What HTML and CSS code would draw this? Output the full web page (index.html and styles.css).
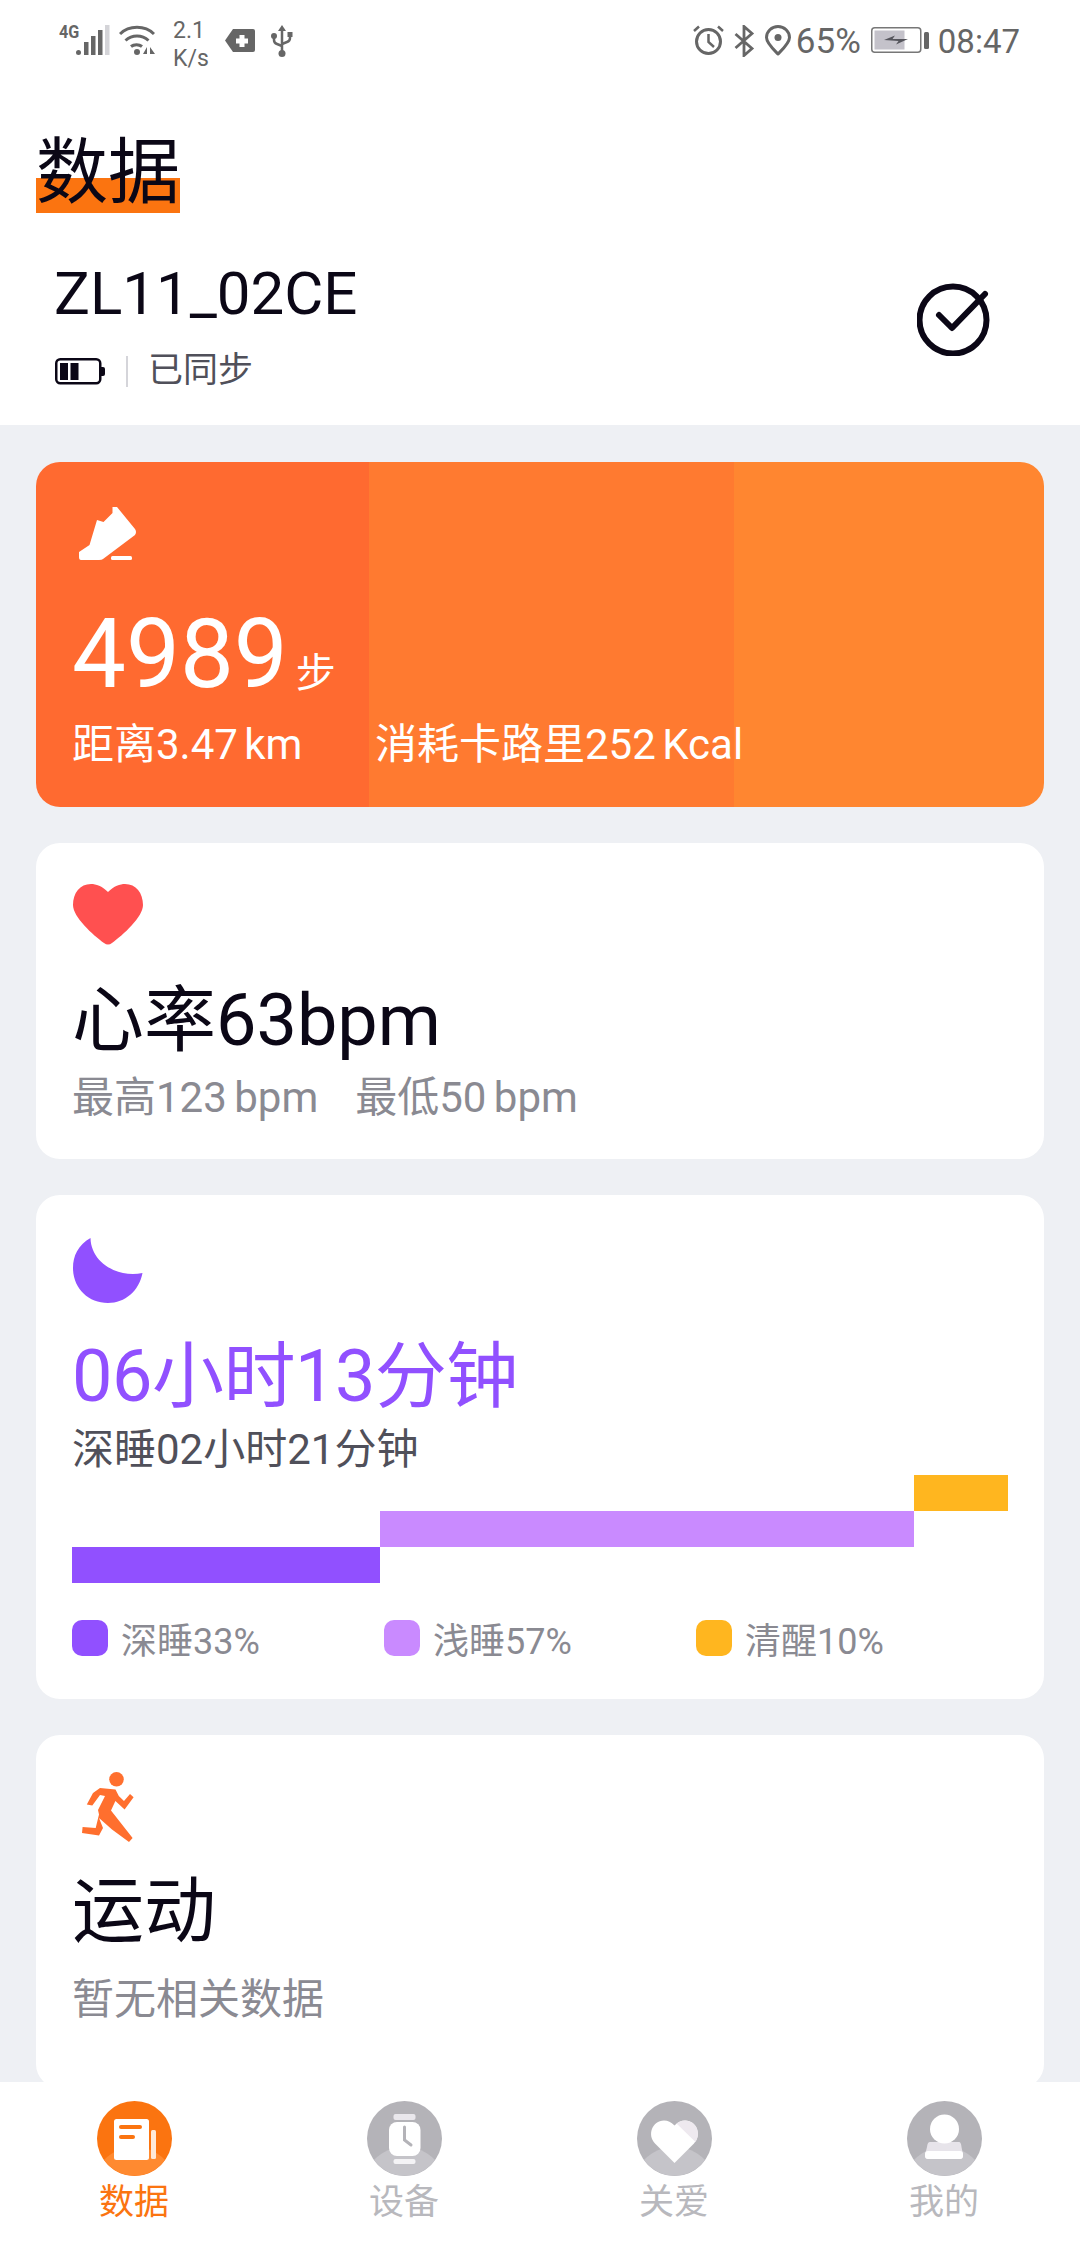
FILE: index.html
```html
<!DOCTYPE html>
<html lang="zh-CN">
<head>
    <meta charset="UTF-8">
    <meta name="viewport" content="width=device-width, initial-scale=1.0">
    <title>数据</title>
    <link rel="stylesheet" href="styles.css">
</head>
<body>
    <div class="app">
        <!-- status bar -->
        <div class="status-bar">
            <div class="status-left">
                <span class="net-type">4G</span>
                <svg class="ic-signal" width="34" height="30" viewBox="0 0 34 30">
                    <circle cx="2.500" cy="27.500" r="2.500" fill="#666"/>
                    <rect x="8" y="17" width="4.500" height="13" fill="#666"/>
                    <rect x="15" y="11" width="4.500" height="19" fill="#666"/>
                    <rect x="22" y="5" width="4.500" height="25" fill="#666"/>
                    <rect x="29" y="0" width="4.500" height="30" fill="#d4d4d8"/>
                </svg>
                <svg class="ic-wifi" width="36" height="30" viewBox="0 0 36 30" fill="none" stroke="#666" stroke-width="3">
                    <path d="M1 9C10 0 26 0 35 9"/>
                    <path d="M6.500 15.500C13 9.500 23 9.500 29.500 15.500"/>
                    <path d="M12 21.500C15 19 20 19 23 21.500"/>
                    <circle cx="18" cy="27" r="3" fill="#666" stroke="none"/>
                    <path d="M24 29L28 22V29ZM31 22V29L36 29Z" fill="#666" stroke="none"/>
                </svg>
                <div class="net-speed">2.1<br>K/s</div>
                <svg class="ic-tag" width="30" height="23" viewBox="0 0 30 23">
                    <path d="M8 0H28a2 2 0 0 1 2 2V21a2 2 0 0 1-2 2H8L0 11.500Z" fill="#666"/>
                    <path d="M14.500 6H19.500V9.500H23V14.500H19.500V18H14.500V14.500H11V9.500H14.500Z" fill="#fff"/>
                </svg>
                <svg class="ic-usb" width="22" height="32" viewBox="0 0 22 32" fill="none" stroke="#666" stroke-width="2.500">
                    <path d="M11 3V28"/>
                    <path d="M11 0L15 6H7Z" fill="#666" stroke="none"/>
                    <circle cx="11" cy="28.500" r="3.500" fill="#666" stroke="none"/>
                    <path d="M3 12V15Q3 18 6 19L11 21"/>
                    <path d="M19 10V13Q19 16 16 17L11 19"/>
                    <circle cx="3" cy="11" r="3" fill="#666" stroke="none"/>
                    <rect x="16.500" y="7" width="5" height="5" fill="#666" stroke="none"/>
                </svg>
            </div>
            <div class="status-right">
                <svg class="ic-alarm" width="31" height="30" viewBox="0 0 31 30" fill="none" stroke="#666" stroke-width="3">
                    <circle cx="15.500" cy="16.500" r="12"/>
                    <path d="M15.500 9V17L21 22" stroke-width="2.500"/>
                    <path d="M1 6L6 1.500M30 6L25 1.500" stroke-width="2.500"/>
                </svg>
                <svg class="ic-bt" width="21" height="32" viewBox="0 0 21 32" fill="none" stroke="#666" stroke-width="2.800">
                    <path d="M1.500 9L18 23.500L10 30.500V1.500L18 8.500L1.500 23"/>
                </svg>
                <svg class="ic-pin" width="26" height="31" viewBox="0 0 26 31" fill="none" stroke="#666" stroke-width="3">
                    <path d="M13 29C8 24 1.500 18 1.500 12.500A11.500 11 0 0 1 24.500 12.500C24.500 18 18 24 13 29Z" stroke-linejoin="round"/>
                    <circle cx="13" cy="12.500" r="3.500" fill="#666" stroke="none"/>
                </svg>
                <span class="status-text batt-pct">65%</span>
                <svg class="ic-batt" width="58" height="26" viewBox="0 0 58 26">
                    <rect x="0.750" y="0.750" width="49" height="24.500" rx="3" fill="#fff" stroke="#777" stroke-width="1.500"/>
                    <rect x="3.500" y="3.500" width="30" height="19" fill="#c4c2ca"/>
                    <path d="M13 13L24 8.500L21.500 12H37L25 17.500L27.500 14Z" fill="#55555c"/>
                    <rect x="53" y="5" width="5" height="17" rx="1.500" fill="#666"/>
                </svg>
                <span class="status-text clock">08:47</span>
            </div>
        </div>

        <!-- page header with the band device -->
        <header class="page-head">
            <h1 class="page-title">数据</h1>
            <div class="device">
                <div class="device-info">
                    <div class="device-name">ZL11_02CE</div>
                    <div class="device-state">
                        <svg class="ic-band-batt" width="50" height="27" viewBox="0 0 50 27">
                            <rect x="1.250" y="1.250" width="44" height="24" rx="4" fill="none" stroke="#0b0716" stroke-width="2.500"/>
                            <rect x="5" y="5" width="8" height="17" fill="#0b0716"/>
                            <rect x="15.500" y="5" width="8" height="17" fill="#0b0716"/>
                            <path d="M46 9H48a2 2 0 0 1 2 2V16a2 2 0 0 1-2 2H46Z" fill="#0b0716"/>
                        </svg>
                        <span class="state-line"></span>
                        <span class="state-text">已同步</span>
                    </div>
                </div>
                <svg class="ic-synced" width="74" height="74" viewBox="0 0 74 74" fill="none" stroke="#0b0716" stroke-width="6">
                    <circle cx="36" cy="38" r="33.500"/>
                    <path d="M22 33L35 46L68 12" stroke-linecap="round" stroke-linejoin="round" stroke-width="6"/>
                </svg>
            </div>
        </header>

        <main class="content">
            <!-- steps -->
            <section class="card card-steps">
                <svg class="ic-shoe" width="59" height="54" viewBox="0 0 59 54" fill="#fff">
                    <path d="M34.500 0H39L57 22Q59 25 57 28L25 52Q24 53 21 53H3Q1 53 1 50V45L11.500 38L19 13L25.500 15L34.500 6Z"/>
                    <rect x="33" y="49" width="21" height="4" rx="1.500"/>
                </svg>
                <div class="steps-total"><span class="steps-num">4989</span><span class="steps-unit">步</span></div>
                <div class="steps-stats">
                    <div class="stat-dist">距离3.47 km</div>
                    <div class="stat-kcal">消耗卡路里252 Kcal</div>
                </div>
            </section>

            <!-- heart rate -->
            <section class="card card-heart">
                <svg class="ic-heart" width="70" height="61" viewBox="0 0 70 61">
                    <path d="M35 8C29 2 23 0 18 0C7 0 0 9 0 21C0 33 20 51 31 59Q35 62 39 59C50 51 70 33 70 21C70 9 63 0 52 0C47 0 41 2 35 8Z" fill="#ff5050"/>
                </svg>
                <div class="card-title">心率63bpm</div>
                <div class="card-sub gray">
                    <span>最高123 bpm</span>
                    <span>最低50 bpm</span>
                </div>
            </section>

            <!-- sleep -->
            <section class="card card-sleep">
                <svg class="ic-moon" width="70" height="65" viewBox="0 0 70 65">
                    <path d="M17.500 0C5 7 0 18 0 30C0 50 15 65 35 65C52 65 66 53 69.500 35C45 40 18 25 17.500 0Z" fill="#9150ff"/>
                </svg>
                <div class="card-title sleep-total">06小时13分钟</div>
                <div class="card-sub dark">深睡02小时21分钟</div>
                <div class="sleep-bars">
                    <div class="bar bar-deep"></div>
                    <div class="bar bar-light"></div>
                    <div class="bar bar-awake"></div>
                </div>
                <div class="sleep-legend">
                    <div class="legend-item"><i class="dot bar-deep"></i>深睡33%</div>
                    <div class="legend-item"><i class="dot bar-light"></i>浅睡57%</div>
                    <div class="legend-item"><i class="dot bar-awake"></i>清醒10%</div>
                </div>
            </section>

            <!-- sport -->
            <section class="card card-sport">
                <svg class="ic-run" width="52" height="70" viewBox="0 0 52 70" fill="#ff6f2e">
                    <circle cx="34.500" cy="7.300" r="7.300"/>
                    <path d="M18 16L33.500 17.500L36.800 24L42 29L48 22L51.600 25.300L42.600 37.600L33.400 29L29 38.600L50.600 66L47 70L30 57.600L17 46L21 56L17 63.600L0 61L0.600 55L13.700 56L17 42.600L16 38L23 24L18 23L10.300 33.600L4.800 32.600L11 21Z"/>
                </svg>
                <div class="card-title">运动</div>
                <div class="card-sub gray">暂无相关数据</div>
            </section>
        </main>

        <!-- bottom tabs -->
        <nav class="tabbar">
            <div class="tab active">
                <svg width="75" height="75" viewBox="0 0 75 75">
                    <circle cx="37.500" cy="37.500" r="37.500" fill="#fb7410"/>
                    <path d="M7 59A42 42 0 0 1 68 59A37.500 37.500 0 0 1 7 59Z" fill="#ff8a30"/>
                    <rect x="17" y="18" width="35" height="41" rx="2.500" fill="#fff"/>
                    <rect x="54" y="29" width="5" height="29" rx="1.500" fill="#ffe9d8"/>
                    <rect x="22" y="24" width="23" height="4" rx="2" fill="#fb7410"/>
                    <rect x="22" y="34" width="16" height="4" rx="2" fill="#fb7410"/>
                </svg>
                <span>数据</span>
            </div>
            <div class="tab">
                <svg width="75" height="75" viewBox="0 0 75 75">
                    <circle cx="37.500" cy="37.500" r="37.500" fill="#b4b3b8"/>
                    <path d="M7 59A42 42 0 0 1 68 59A37.500 37.500 0 0 1 7 59Z" fill="#c5c4c9"/>
                    <rect x="26.500" y="13" width="22" height="6" rx="2" fill="#e9e7ec"/>
                    <rect x="26.500" y="58" width="22" height="5" rx="2" fill="#f4f3f5"/>
                    <rect x="22" y="21" width="31.500" height="34" rx="8" fill="#fff"/>
                    <path d="M37.500 26V39L44 44" fill="none" stroke="#b4b3b8" stroke-width="3" stroke-linecap="round"/>
                </svg>
                <span>设备</span>
            </div>
            <div class="tab">
                <svg width="75" height="75" viewBox="0 0 75 75">
                    <circle cx="37.500" cy="37.500" r="37.500" fill="#b4b3b8"/>
                    <path d="M7 59A42 42 0 0 1 68 59A37.500 37.500 0 0 1 7 59Z" fill="#c5c4c9"/>
                    <path d="M37.500 62L18 42.500C10 34 15 20 27 19.500C31 19.500 34 21 37.500 24.500C41 21 44 19.500 48 19.500C60 20 65 34 57 42.500Z" fill="#fff"/>
                    <path d="M39.500 22.500C42 20.500 45 19.500 48 19.500C60 20 64 32 58.500 41Z" fill="#eee9ef"/>
                </svg>
                <span>关爱</span>
            </div>
            <div class="tab">
                <svg width="75" height="75" viewBox="0 0 75 75">
                    <circle cx="37.500" cy="37.500" r="37.500" fill="#b4b3b8"/>
                    <path d="M7 59A42 42 0 0 1 68 59A37.500 37.500 0 0 1 7 59Z" fill="#c5c4c9"/>
                    <path d="M23 41H52Q54 41 54.500 46L56 54Q56 58 53 58H21Q18 58 18 54L20 46Q20.500 41 23 41Z" fill="#e7e4ea"/>
                    <rect x="18" y="50" width="38" height="8" rx="3" fill="#fff"/>
                    <circle cx="37.500" cy="28" r="14.500" fill="#fff"/>
                </svg>
                <span>我的</span>
            </div>
        </nav>
    </div>
</body>
</html>
```

FILE: styles.css
```css
* {
    box-sizing: border-box;
}

body {
    margin: 0;
    background-color: #fff;
    font-family: Roboto, "Noto Sans CJK SC", sans-serif;
    color: #0b0716;
}

svg {
    display: block;
    flex-shrink: 0;
}

.app {
    width: 1080px;
    height: 2244px;
    display: flex;
    flex-direction: column;
    overflow: hidden;
}

/* status bar */
.status-bar {
    height: 80px;
    display: flex;
    justify-content: space-between;
    padding: 19px 60px 0 59px;
    color: #666;
}

.status-left,
.status-right {
    display: flex;
    align-items: flex-start;
}

.net-type {
    width: 17px;
    margin-top: 3px;
    font-size: 19px;
    font-weight: 700;
    line-height: 20px;
    white-space: nowrap;
    transform: scaleX(0.85);
    transform-origin: left center;
}

.ic-signal,
.ic-wifi,
.ic-usb,
.ic-alarm,
.ic-pin {
    margin-top: 6px;
}

.ic-wifi {
    margin-left: 9px;
}

.net-speed {
    margin-left: 18px;
    margin-top: -2px;
    font-size: 23px;
    line-height: 28px;
}

.ic-tag {
    margin-left: 16px;
    margin-top: 10px;
}

.ic-usb {
    margin-left: 16px;
}

.ic-bt {
    margin-left: 10px;
    margin-top: 6px;
}

.ic-pin {
    margin-left: 10px;
}

.status-text {
    font-size: 33px;
    line-height: 46px;
}

.batt-pct {
    margin-left: 5px;
    font-size: 35px;
}

.ic-batt {
    margin-left: 10px;
    margin-top: 8px;
}

.clock {
    margin-left: 9px;
}

/* header */
.page-head {
    height: 345px;
    padding: 52px 36px 0;
}

.page-title {
    display: inline-block;
    margin: 0;
    height: 81px;
    font-size: 72px;
    font-weight: 400;
    line-height: 81px;
    background: linear-gradient(to bottom, transparent 46px, #fb7410 46px);
}

.device {
    display: flex;
    justify-content: space-between;
    padding: 47px 53px 0 18px;
}

.device-name {
    font-size: 60px;
    line-height: 68px;
}

.device-state {
    display: flex;
    align-items: center;
    margin-top: 25px;
    height: 36px;
}

.ic-band-batt {
    margin-left: 1px;
}

.state-line {
    width: 2px;
    height: 31px;
    margin: 0 20px 0 21px;
    background-color: #d5d5da;
}

.state-text {
    font-size: 35px;
    line-height: 36px;
    color: #50505a;
}

.ic-synced {
    margin-top: 22px;
}

/* cards */
.content {
    flex: 1;
    min-height: 0;
    overflow: hidden;
    display: flex;
    flex-direction: column;
    gap: 36px;
    padding: 37px 36px 0;
    background-color: #eef0f4;
}

.card {
    flex-shrink: 0;
    padding: 0 36px;
    background-color: #fff;
    border-radius: 24px;
}

.card-title {
    font-size: 72px;
    line-height: 84px;
    white-space: nowrap;
}

.card-sub {
    font-size: 42px;
    line-height: 50px;
    word-spacing: -3px;
}

.card-sub.gray {
    color: #8a8a92;
}

.card-sub.dark {
    color: #50505a;
}

/* steps */
.card-steps {
    height: 345px;
    padding-top: 45px;
    color: #fff;
    background: linear-gradient(to right, #ff6a30 333px, #ff7a30 333px, #ff7a30 698px, #ff8630 698px);
}

.ic-shoe {
    margin-left: 6px;
}

.steps-total {
    display: flex;
    align-items: baseline;
    margin-top: 37px;
    height: 112px;
}

.steps-num {
    font-size: 96px;
    line-height: 112px;
}

.steps-unit {
    margin-left: 8px;
    font-size: 40px;
}

.steps-stats {
    display: flex;
    margin-top: 10px;
    font-size: 42px;
    line-height: 50px;
    word-spacing: -4px;
    white-space: nowrap;
}

.stat-dist {
    width: 303px;
}

/* heart rate */
.card-heart {
    height: 316px;
    padding-top: 41px;
}

.ic-heart {
    margin-left: 1px;
    margin-bottom: 34px;
}

.card-heart .card-sub {
    display: flex;
    gap: 37px;
    margin-top: 10px;
}

/* sleep */
.card-sleep {
    height: 504px;
    padding-top: 43px;
}

.ic-moon {
    margin-left: 1px;
    margin-bottom: 32px;
}

.sleep-total {
    color: #9150ff;
    letter-spacing: -0.5px;
}

.card-sleep .card-sub {
    margin-top: 6px;
}

.sleep-bars {
    display: flex;
    height: 108px;
}

.bar {
    height: 36px;
}

.bar-deep {
    width: 308px;
    margin-top: 72px;
    background-color: #9150ff;
}

.bar-light {
    width: 534px;
    margin-top: 36px;
    background-color: #c98aff;
}

.bar-awake {
    width: 94px;
    background-color: #ffb61f;
}

.sleep-legend {
    display: flex;
    margin-top: 37px;
}

.legend-item {
    display: flex;
    align-items: center;
    width: 312px;
    height: 36px;
    font-size: 36px;
    color: #8a8a92;
}

.dot {
    width: 36px;
    height: 36px;
    margin: 0 13px 0 0;
    border-radius: 10px;
}

/* sport */
.card-sport {
    height: 353px;
    padding-top: 37px;
}

.ic-run {
    margin-left: 10px;
    margin-bottom: 28px;
}

.card-sport .card-sub {
    margin-top: 21px;
}

/* tabs */
.tabbar {
    height: 162px;
    display: grid;
    grid-template-columns: repeat(4, 270px);
    margin-left: -1px;
    padding-top: 19px;
    background-color: #fff;
}

.tab {
    display: flex;
    flex-direction: column;
    align-items: center;
    font-size: 35px;
    line-height: 54px;
    color: #b8b8bd;
}

.tab.active {
    color: #fb7410;
}
```
